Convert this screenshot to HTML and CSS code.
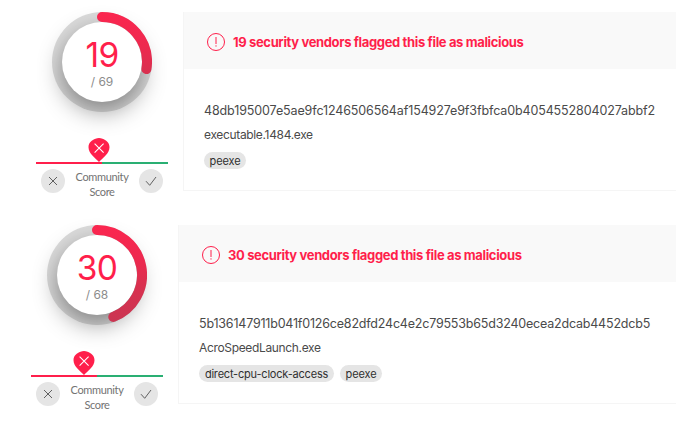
FILE: index.html
```html
<!DOCTYPE html>
<html lang="en">
<head>
<meta charset="utf-8">
<title>File reports</title>
<link rel="stylesheet" href="styles.css">
</head>
<body>
<svg width="0" height="0" class="defs">
  <symbol id="cross" viewBox="0 0 24 24"><path d="M8 8l8 8M16 8l-8 8"/></symbol>
  <symbol id="check" viewBox="0 0 24 24"><path d="M7 12.2l3.7 4.1L17 8"/></symbol>
  <symbol id="alert" viewBox="0 0 20 20"><circle cx="10" cy="10" r="8.5"/><path d="M10 5v7M10 13.3v1.3"/></symbol>
  <symbol id="pin" viewBox="0 0 22 24"><path class="pin-body" d="M11 24C7.500 20 .500 15.500 .500 9.200C.500 4.500 4 2 7.500 .700Q11-.500 14.500 .700C18 2 21.500 4.500 21.500 9.200C21.500 15.500 14.500 20 11 24Z"/><path class="pin-cross" d="M6.600 5.600l9 9M15.600 5.600l-9 9"/></symbol>
</svg>
<main class="reports">
  <section class="report">
    <aside class="score">
      <div class="dial">
        <div class="disc"><strong class="count">19</strong><span class="total">/ 69</span></div>
        <svg class="arc" viewBox="0 0 100 100"><defs><linearGradient id="g1" gradientUnits="userSpaceOnUse" x1="0" y1="0" x2="0" y2="100"><stop offset="0" stop-color="#fb264f"/><stop offset=".35" stop-color="#ed294f"/><stop offset=".6" stop-color="#d9304f"/><stop offset="1" stop-color="#c93652"/></linearGradient></defs><path stroke="url(#g1)" d="M50 5A45 45 0 0 1 94.400 57.100"/></svg>
      </div>
      <div class="community">
        <svg class="pin first"><use href="#pin"/></svg>
        <div class="bar"></div>
        <div class="votes">
          <span class="vote"><svg><use href="#cross"/></svg></span>
          <span class="label">Community<br>Score</span>
          <span class="vote"><svg><use href="#check"/></svg></span>
        </div>
      </div>
    </aside>
    <article class="card">
      <header class="verdict"><svg><use href="#alert"/></svg><h2>19 security vendors flagged this file as malicious</h2></header>
      <div class="details">
        <p class="hash hash-a">48db195007e5ae9fc1246506564af154927e9f3fbfca0b4054552804027abbf2</p>
        <p class="name">executable.1484.exe</p>
        <div class="tags"><span class="tag">peexe</span></div>
      </div>
    </article>
  </section>
  <section class="report shifted">
    <aside class="score">
      <div class="dial">
        <div class="disc"><strong class="count">30</strong><span class="total">/ 68</span></div>
        <svg class="arc" viewBox="0 0 100 100"><path stroke="url(#g1)" d="M50 5A45 45 0 0 1 66.300 91.960"/></svg>
      </div>
      <div class="community">
        <svg class="pin second"><use href="#pin"/></svg>
        <div class="bar"></div>
        <div class="votes">
          <span class="vote"><svg><use href="#cross"/></svg></span>
          <span class="label">Community<br>Score</span>
          <span class="vote"><svg><use href="#check"/></svg></span>
        </div>
      </div>
    </aside>
    <article class="card">
      <header class="verdict"><svg><use href="#alert"/></svg><h2>30 security vendors flagged this file as malicious</h2></header>
      <div class="details">
        <p class="hash hash-b">5b136147911b041f0126ce82dfd24c4e2c79553b65d3240ecea2dcab4452dcb5</p>
        <p class="name">AcroSpeedLaunch.exe</p>
        <div class="tags"><span class="tag wide">direct-cpu-clock-access</span><span class="tag">peexe</span></div>
      </div>
    </article>
  </section>
</main>
</body>
</html>
```
FILE: styles.css
```css
* { box-sizing: border-box; }
body { margin: 0; background: #fff; color: #4a4a4a; font-family: Inter, "Liberation Sans", sans-serif; }
h2, p { margin: 0; }
.defs { position: absolute; }
.reports { display: flex; flex-direction: column; gap: 34px; padding-top: 12px; height: 429px; overflow: hidden; }
.report { display: flex; gap: 15px; padding-left: 36px; height: 179px; flex: none; }
.shifted { padding-left: 31px; }
.score { width: 132px; display: flex; flex-direction: column; align-items: center; flex: none; }
.dial { position: relative; width: 100px; height: 100px; border-radius: 50%; background: #dcdcdc; padding: 10px; flex: none; }
.disc { width: 80px; height: 80px; border-radius: 50%; background: #fff; box-shadow: 0 9px 24px rgba(0,0,0,.42); display: flex; flex-direction: column; align-items: center; padding-top: 14px; }
.count { font-size: 33.500px; line-height: 38px; font-weight: 400; color: #ff1f4b; letter-spacing: -.6px; }
.total { font-size: 12px; line-height: 15px; color: #8c8c8c; font-weight: 400; }
.arc { position: absolute; inset: 0; width: 100px; height: 100px; }
.arc path { fill: none; stroke-width: 10; stroke-linecap: round; }
.community { width: 132px; padding-top: 26px; }
.pin { display: block; width: 22px; height: 24px; }
.first { margin-left: 51.500px; }
.second { margin-left: 41.500px; }
.pin-body { fill: #ff1f4b; }
.pin-cross { fill: none; stroke: #fff; stroke-width: 1.1; }
.bar { height: 2px; background: linear-gradient(90deg, #ff1f4b 50%, #2aaf73 50%); }
.votes { display: flex; justify-content: space-between; padding: 5px 5px 0; }
.vote { width: 24px; height: 24px; border-radius: 50%; background: #e5e5e5; }
.vote svg { display: block; width: 24px; height: 24px; fill: none; stroke: #606060; stroke-width: 1; }
.label { font-family: Lato, sans-serif; font-size: 11px; line-height: 15px; text-align: center; color: #737373; letter-spacing: -.35px; }
.card { flex: 1; border: 1px solid #f5f5f5; border-width: 0 0 1px 1px; }
.verdict { height: 57px; background: #f9f9f9; display: flex; align-items: center; padding: 2px 0 0 22px; gap: 7px; }
.verdict svg { width: 20px; height: 20px; fill: none; stroke: #ff1f4b; stroke-width: 1; }
h2 { font-size: 13px; line-height: 18px; font-weight: 700; color: #ff1f4b; white-space: nowrap; letter-spacing: -.36px; }
.details { padding: 32px 0 0 20px; }
.hash { font-size: 12.500px; line-height: 20px; white-space: nowrap; }
.hash-a { letter-spacing: -.12px; }
.hash-b { letter-spacing: -.2px; }
.name { font-size: 12px; line-height: 18px; margin-top: 5px; letter-spacing: -.34px; }
.tags { display: flex; gap: 6px; margin-top: 8px; }
.tag { width: 42px; height: 17px; border-radius: 9px; background: #e5e5e5; color: #303030; font-size: 11px; line-height: 18px; text-align: center; white-space: nowrap; letter-spacing: -.1px; }
.wide { width: 135px; letter-spacing: -.2px; }
```
